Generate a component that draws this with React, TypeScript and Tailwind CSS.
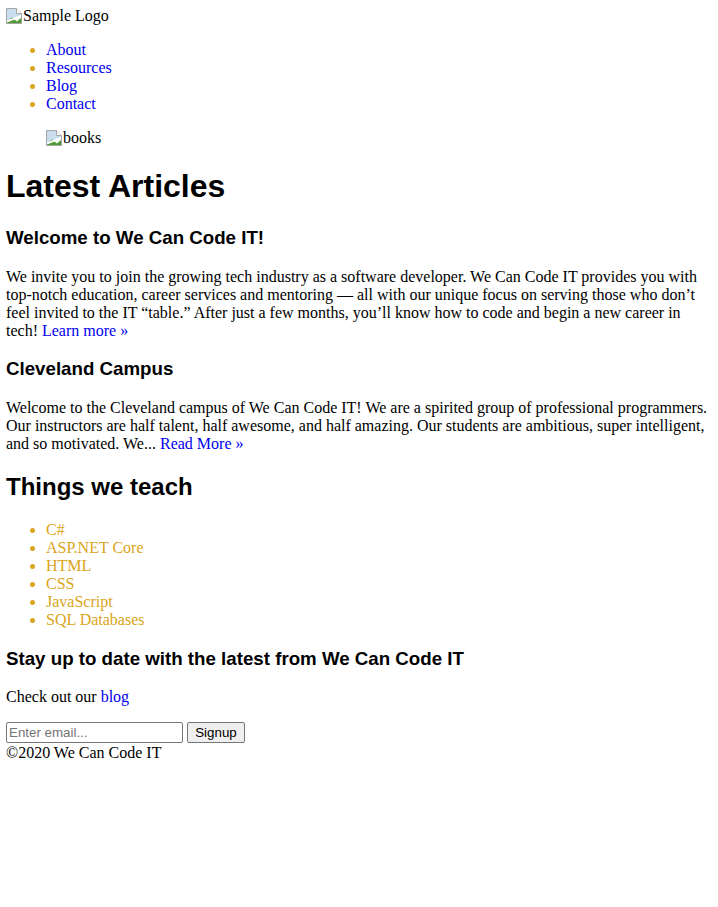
const navLinks = ["About", "Resources", "Blog", "Contact"];

const teaches = ["C#", "ASP.NET Core", "HTML", "CSS", "JavaScript", "SQL Databases"];

function BrokenImage() {
  return (
    <svg width="16" height="16" viewBox="0 0 16 16" className="mr-[1px] inline-block align-[-3px]">
      <path d="M0.5 0.5h10l5 5v10h-15z" fill="#f4f7fa" stroke="#a5a5a5" />
      <path d="M1 1h9.5v4.5H15V7L1 12.5z" fill="#c9ddef" />
      <path d="M10.5 0.5v5h5" fill="#ffffff" stroke="#a5a5a5" />
      <path d="M1 15V13.5L6 9.5L11 13.5L15 10V15z" fill="#4f9a32" />
      <path d="M1 12.5L15 7V9L1 14.5z" fill="#ffffff" />
    </svg>
  );
}

export default function App() {
  return (
    <div className="px-[6px] pt-[7px] pb-[6px] font-['Liberation_Serif',serif] text-[16px] leading-[normal] text-black bg-white">
      <header>
        <div>
          <BrokenImage />
          Sample Logo
        </div>
        <nav>
          <ul className="my-[16px] list-disc pl-[40px] marker:text-[#daa520]">
            {navLinks.map((link) => (
              <li key={link}>
                <a href="#" className="text-[#0000ee]">
                  {link}
                </a>
              </li>
            ))}
          </ul>
        </nav>
        <figure className="mx-[40px] my-[16px]">
          <BrokenImage />
          books
        </figure>
      </header>

      <main>
        <h1 className="my-[21.44px] font-['Liberation_Sans',sans-serif] text-[32px] font-bold">
          Latest Articles
        </h1>
        <article>
          <h3 className="my-[18.72px] font-['Liberation_Sans',sans-serif] text-[18.72px] font-bold">
            Welcome to We Can Code IT!
          </h3>
          <p className="my-[16px]">
            We invite you to join the growing tech industry as a software developer. We Can
            Code IT provides you with top-notch education, career services and mentoring —
            all with our unique focus on serving those who don’t feel invited to the IT
            “table.” After just a few months, you’ll know how to code and begin a new career
            in tech!{" "}
            <a href="#" className="text-[#0000ee]">
              Learn more »
            </a>
          </p>
        </article>
        <article>
          <h3 className="my-[18.72px] font-['Liberation_Sans',sans-serif] text-[18.72px] font-bold">
            Cleveland Campus
          </h3>
          <p className="my-[16px]">
            Welcome to the Cleveland campus of We Can Code IT! We are a spirited group of
            professional programmers. Our instructors are half talent, half awesome, and half
            amazing. Our students are ambitious, super intelligent, and so motivated. We...{" "}
            <a href="#" className="text-[#0000ee]">
              Read More »
            </a>
          </p>
        </article>

        <h2 className="my-[19.92px] font-['Liberation_Sans',sans-serif] text-[24px] font-bold">
          Things we teach
        </h2>
        <ul className="my-[16px] list-disc pl-[40px] text-[#daa520]">
          {teaches.map((t) => (
            <li key={t}>{t}</li>
          ))}
        </ul>

        <h3 className="my-[18.72px] font-['Liberation_Sans',sans-serif] text-[18.72px] font-bold">
          Stay up to date with the latest from We Can Code IT
        </h3>
        <p className="my-[16px]">
          Check out our{" "}
          <a href="#" className="text-[#0000ee]">
            blog
          </a>
        </p>
        <form className="flex items-center gap-[4px]">
          <input
            type="email"
            placeholder="Enter email..."
            className="h-[21px] w-[177px] rounded-[2px] border border-[#767676] px-[2px] font-['Liberation_Sans',sans-serif] text-[13.33px] placeholder:text-[#757575]"
          />
          <button
            type="button"
            className="h-[21px] w-[58px] rounded-[2px] border border-[#767676] bg-[#efefef] font-['Liberation_Sans',sans-serif] text-[13.33px] text-black"
          >
            Signup
          </button>
        </form>
      </main>

      <footer className="mt-[1px]">©2020 We Can Code IT</footer>
    </div>
  );
}
